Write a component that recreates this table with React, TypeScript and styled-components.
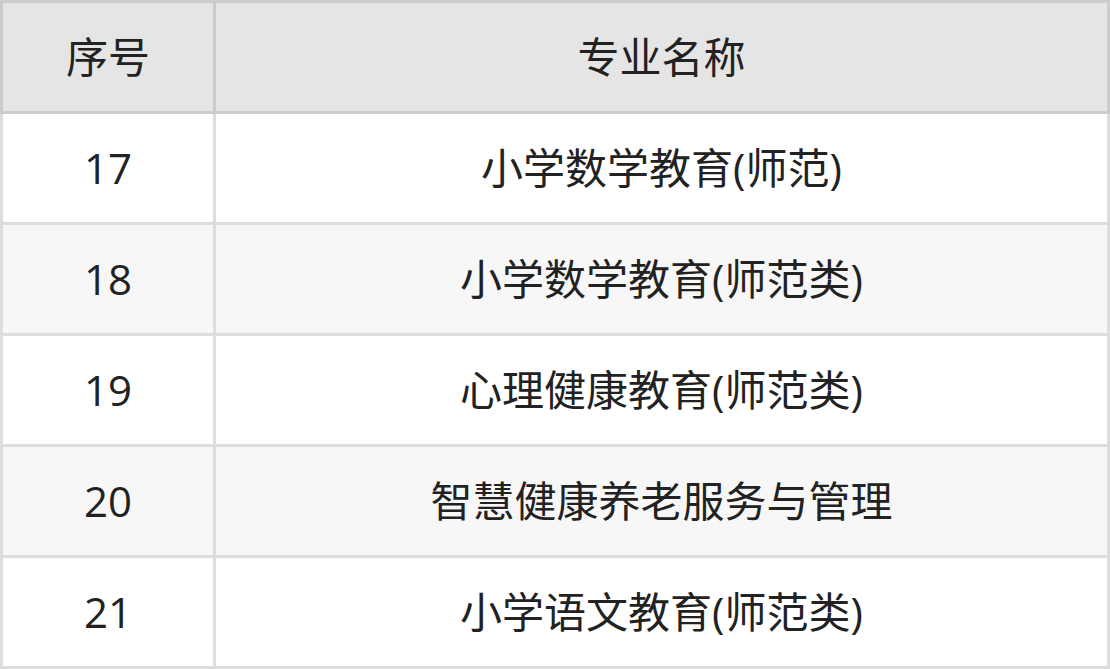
import React from 'react';
import styled, { createGlobalStyle } from 'styled-components';

const Global = createGlobalStyle`
    html, body {
        margin: 0;
        padding: 0;
        background: #fff;
    }
    body {
        font-family: 'Open Sans', 'Noto Sans CJK SC', sans-serif;
    }
`;

type RowProps = {
    $line: string,
    $first?: boolean
}

const Table = styled.div`
    width: 1110px;
    display: flex;
    flex-direction: column;
`;

const Row = styled.div<RowProps>`
    display: grid;
    grid-template-columns: 210px 1fr;
    column-gap: 3px;
    padding: ${p => p.$first ? '3px 3px 3px' : '0 3px 3px'};
    background: ${p => p.$line};
`;

const Cell = styled.div<{ $bg: string }>`
    height: 108px;
    display: flex;
    align-items: center;
    justify-content: center;
    background: ${p => p.$bg};
    color: #222;
    font-size: 42px;
    line-height: 1;
`;

const rows = [
    { no: '17', name: '小学数学教育(师范)' },
    { no: '18', name: '小学数学教育(师范类)' },
    { no: '19', name: '心理健康教育(师范类)' },
    { no: '20', name: '智慧健康养老服务与管理' },
    { no: '21', name: '小学语文教育(师范类)' },
];

const App = () => {
    return (
        <>
            <Global />
            <Table>
                <Row $line="#cccccc" $first>
                    <Cell $bg="#e5e5e5">序号</Cell>
                    <Cell $bg="#e5e5e5">专业名称</Cell>
                </Row>
                {rows.map((r, i) => {
                    const bg = i % 2 === 1 ? '#f7f7f7' : '#ffffff';
                    return (
                        <Row $line="#dddddd" key={r.no}>
                            <Cell $bg={bg}>{r.no}</Cell>
                            <Cell $bg={bg}>{r.name}</Cell>
                        </Row>
                    );
                })}
            </Table>
        </>
    );
}

export default App;
